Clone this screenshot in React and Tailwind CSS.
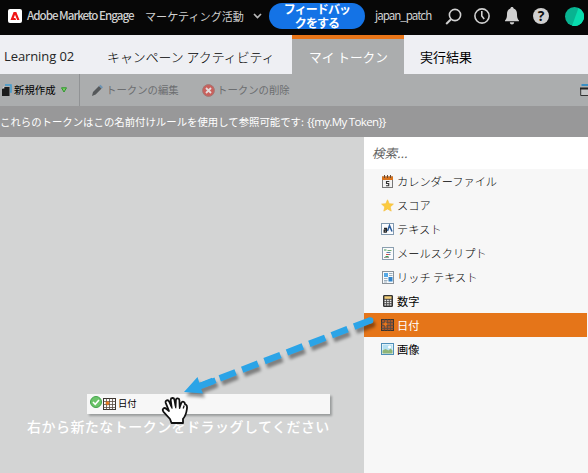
import React from "react";

const jp = "font-['Noto_Sans_CJK_JP',sans-serif]";

function AdobeLogo() {
  return (
    <svg className="ml-2 h-[14px] w-[14px] shrink-0" viewBox="0 0 14 14">
      <rect width="14" height="14" rx="2" fill="#fff" />
      <path d="M5.6 3h2.7l3.2 8H9.2L7 5.7 5.7 9h1.6l.8 2H2.5z" fill="#f01414" />
    </svg>
  );
}

function CalendarIcon() {
  return (
    <svg className="h-[13px] w-[13px]" viewBox="0 0 13 13">
      <rect x="1.5" y="2" width="10" height="10.5" fill="#f3f3f3" stroke="#777" />
      <rect x="1" y="1.5" width="11" height="3.5" fill="#d9731c" />
      <path d="M3.5 0v3M6.5 0v3M9.5 0v3" stroke="#6b4a30" />
      <path d="M8.3 6.5H5.5v2h2.2v2.3H5" fill="none" stroke="#333" strokeWidth="1.1" />
    </svg>
  );
}

function StarIcon() {
  return (
    <svg className="h-[13px] w-[13px]" viewBox="0 0 13 13">
      <path d="M6.5.8l1.7 3.9 4.2.4-3.2 2.8 1 4.2-3.7-2.2-3.7 2.2 1-4.2L.6 5.1l4.2-.4z" fill="#fbcb3f" stroke="#f5be40" strokeWidth=".7" strokeLinejoin="round" />
    </svg>
  );
}

function TextIcon() {
  return (
    <svg className="h-[12px] w-[13px]" viewBox="0 0 13 12">
      <rect x=".5" y=".5" width="12" height="11" fill="#fafcff" stroke="#829ab0" />
      <path d="M3 5.5h2.4v4M5.4 7.2H3.2v2h2.2" fill="none" stroke="#222" strokeWidth="1.3" />
      <path d="M6.5 8l2-5.5L11 8.5" fill="none" stroke="#2a5c9a" strokeWidth="1.5" />
    </svg>
  );
}

function ScriptIcon() {
  return (
    <svg className="h-[13px] w-[12px]" viewBox="0 0 12 13">
      <rect x=".5" y=".5" width="11" height="12" fill="#fbfbfb" stroke="#8b9fb0" />
      <path d="M2 3h2.5M3.5 9.5h3" stroke="#3f9b52" />
      <path d="M5.500 3.500H9.500" stroke="#6fa96f" />
      <path d="M4 7.500h3" stroke="#cf5548" />
      <path d="M4.500 5.500h4M7 7.500h1.500" stroke="#587ea9" />
      <path d="M2 10.500h5" stroke="#999" />
    </svg>
  );
}

function RichIcon() {
  return (
    <svg className="h-[13px] w-[12px]" viewBox="0 0 12 13">
      <rect x=".5" y=".5" width="11" height="12" fill="#f7fafc" stroke="#8b9299" />
      <rect x="2" y="2" width="4" height="4" fill="#55a9e6" />
      <rect x="6.5" y="6" width="4" height="4.5" fill="#2f83cb" />
      <path d="M7 2.500h3.500M7 4.500h3.500M2 7.500h3.500M2 9.500h3.500M2 11h3" stroke="#9fb0bd" />
    </svg>
  );
}

function NumberIcon() {
  return (
    <svg className="h-[12px] w-[10px]" viewBox="0 0 10 12">
      <rect x=".5" y=".5" width="9" height="11" rx=".5" fill="#444" stroke="#333" />
      <rect x="1.5" y="1.3" width="7" height="2.5" fill="#f3cd77" />
      <path d="M1.500 5.500h7M1.500 7.700h7M1.500 9.900h7" stroke="#eee" strokeWidth="1.3" strokeDasharray="1.7 .9" />
    </svg>
  );
}

function DateIcon({ fill }) {
  return (
    <svg className="h-[12px] w-[13px]" viewBox="0 0 13 12">
      <rect x=".5" y=".5" width="12" height="11" fill={fill} stroke="#3c3530" />
      <path d="M.5 3.500h12M.5 6.500h12M.5 9.500h12M3.500.5v11M6.500.5v11M9.500.5v11" stroke="#5b4c42" strokeWidth=".8" />
      <path d="M4.500 3.300v4M2.600 5.200h3.800" stroke="#e8781c" strokeWidth="1.7" />
    </svg>
  );
}

function ImageIcon() {
  return (
    <svg className="h-[12px] w-[13px]" viewBox="0 0 13 12">
      <rect x=".5" y=".5" width="12" height="11" fill="#fff" stroke="#4e8fb8" />
      <rect x="1.5" y="1.5" width="10" height="9" fill="#b5e0f2" />
      <path d="M1.500 7.500l3-1.500 3 1.500 2-2 2 2v3h-10z" fill="#8fb577" />
      <circle cx="8.5" cy="4" r="1.5" fill="#fff" />
    </svg>
  );
}

function Header() {
  return (
    <header className={`${jp} flex h-[35px] items-center bg-[#070707] pb-[3px] text-[#d0d0d0]`}>
      <AdobeLogo />
      <span className="ml-[5px] w-[108px] shrink-0 text-[11.6px] font-medium tracking-[-1px] whitespace-nowrap">Adobe Marketo Engage</span>
      <span className="ml-[10px] w-[101px] shrink-0 text-[11.1px] whitespace-nowrap">マーケティング活動</span>
      <svg className="ml-[7px] h-[6px] w-[9px] shrink-0" viewBox="0 0 9 6">
        <path d="M1 1l3.500 3.500L8 1" fill="none" stroke="#b8b8b8" strokeWidth="1.7" />
      </svg>
      <button className="ml-[7px] flex h-[26px] w-[96px] shrink-0 items-center justify-center rounded-full bg-[#1473e6] text-center text-[12px] leading-[14px] font-bold tracking-[-0.9px] text-white">
        フィードバッ
        <br />
        クをする
      </button>
      <span className="ml-[10px] w-[58px] shrink-0 text-[11.6px] tracking-[-1px] whitespace-nowrap">japan_patch</span>
      <svg className="ml-[12px] h-[17px] w-[17px] shrink-0" viewBox="0 0 17 17">
        <circle cx="10" cy="7" r="5.6" fill="none" stroke="#d0d0d0" strokeWidth="1.6" />
        <path d="M6 11.200L1.200 16" stroke="#d0d0d0" strokeWidth="2" />
      </svg>
      <svg className="ml-[12px] h-[16px] w-[16px] shrink-0" viewBox="0 0 16 16">
        <circle cx="8" cy="8" r="7.1" fill="none" stroke="#d0d0d0" strokeWidth="1.6" />
        <path d="M7.800 3v5l2.400 3" fill="none" stroke="#d0d0d0" strokeWidth="1.6" />
      </svg>
      <svg className="ml-[15px] h-[18px] w-[14px] shrink-0" viewBox="0 0 14 18">
        <path d="M7 0c1 0 1.600.6 1.600 1.600C11 2.300 12 4.500 12 7c0 4 .8 5 2 6.500v.8H0v-.8C1.200 12 2 11 2 7c0-2.500 1-4.700 3.400-5.400C5.400.6 6 0 7 0zM4.800 15.300h4.400C9 16.900 8.200 17.500 7 17.500s-2-.6-2.200-2.200z" fill="#d0d0d0" />
      </svg>
      <span className="ml-[14px] flex h-4 w-4 shrink-0 items-center justify-center rounded-full bg-[#d0d0d0] font-['Open_Sans',sans-serif] text-[14px] leading-none font-bold text-[#111]">?</span>
      <svg className="ml-[16px] h-[19px] w-[19px] shrink-0" viewBox="0 0 19 19">
        <circle cx="9.5" cy="9.5" r="9.5" fill="#08b391" />
        <path d="M13.500.9A9.500 9.500 0 0 1 7 18.700z" fill="#08dcae" />
      </svg>
    </header>
  );
}

function Tabs() {
  return (
    <nav className={`${jp} flex h-[39px] bg-[#eeeff3] text-[12.9px] text-[#262626]`}>
      <div className="flex w-[292px] items-center pt-[5px]">
        <span className="ml-[4px] w-[103px] font-['Open_Sans',sans-serif] text-[13px] tracking-[-0.1px]">Learning 02</span>
        <span className="font-light whitespace-nowrap text-black">キャンペーン アクティビティ</span>
      </div>
      <div className="flex w-[112px] items-center border-t-4 border-[#e87518] bg-[#abadae] pl-[17px] pt-[1px] text-[12.7px] text-white">
        <span className="whitespace-nowrap">マイ トークン</span>
      </div>
      <div className="flex items-center pt-[5px] pl-[16px] text-[13px] text-black">実行結果</div>
    </nav>
  );
}

function Toolbar() {
  return (
    <div className={`${jp} flex h-[32px] items-center bg-[#abadae] text-[10.4px] text-[#6c6e70]`}>
      <div className="flex h-full w-[80px] items-center border-r border-[#919395]">
        <svg className="ml-[2px] h-[12px] w-[10px]" viewBox="0 0 10 12">
          <path d="M3 1h6v7H8" fill="none" stroke="#3f9bd0" strokeWidth="1.5" />
          <path d="M2 3h5.500v9H0V5z" fill="#1c1c1c" />
          <path d="M0 4.500L2.300 2v2.500z" fill="#ddd" />
        </svg>
        <span className="ml-[2px] w-[42px] whitespace-nowrap text-black">新規作成</span>
        <svg className="ml-[5px] h-[6px] w-[6px]" viewBox="0 0 6 6">
          <path d="M.5 .8h5L3 5z" fill="#7dd164" stroke="#2e962e" />
        </svg>
      </div>
      <svg className="ml-[11px] h-[13px] w-[12px]" viewBox="0 0 12 13">
        <path d="M1 12l1-4L8 2l2.600 2.600-6 6z" fill="#55585a" />
        <path d="M8 2l1.500-1.200L12 3.300l-1.400 1.300z" fill="#6c94b4" />
      </svg>
      <span className="ml-[3px] w-[74px] whitespace-nowrap">トークンの編集</span>
      <svg className="ml-[22px] h-[13px] w-[13px]" viewBox="0 0 13 13">
        <circle cx="6.5" cy="6.5" r="5.9" fill="#c9605c" stroke="#a37775" />
        <path d="M4 4l5 5M9 4L4 9" stroke="#e3dcdc" strokeWidth="1.8" />
      </svg>
      <span className="ml-[2px] whitespace-nowrap">トークンの削除</span>
      <svg className="ml-auto h-[12px] w-[8px]" viewBox="0 0 8 12">
        <path d="M1.500 1H8" stroke="#398ec4" strokeWidth="2" />
        <path d="M8 4.500H.7v7H8" fill="#c4c5c6" stroke="#333" />
        <path d="M0 4.500h8" stroke="#222" strokeWidth="2" />
      </svg>
    </div>
  );
}

const tokens = [
  { label: "カレンダーファイル", icon: <CalendarIcon />, kana: true },
  { label: "スコア", icon: <StarIcon />, kana: true },
  { label: "テキスト", icon: <TextIcon />, kana: true },
  { label: "メールスクリプト", icon: <ScriptIcon />, kana: true },
  { label: "リッチ テキスト", icon: <RichIcon />, kana: true },
  { label: "数字", icon: <NumberIcon /> },
  { label: "日付", icon: <DateIcon fill="#a8582a" />, active: true },
  { label: "画像", icon: <ImageIcon /> },
];

function TokenPanel() {
  return (
    <aside className={`${jp} w-[224px] bg-[#f7f7f7]`}>
      <div className="flex h-[32px] items-center bg-white pl-[8px] text-[12.5px] text-[#606060] italic">
        検索...
      </div>
      <ul className="mr-px">
        {tokens.map((t) => (
          <li
            key={t.label}
            className={`flex h-[24px] items-center pl-[17px] text-[11.2px] ${t.active ? "bg-[#e57519] text-white" : "text-black"} ${t.kana ? "font-light" : "font-normal"}`}
          >
            <span className="flex w-[13px] justify-center">{t.icon}</span>
            <span className="ml-[3px] whitespace-nowrap">{t.label}</span>
          </li>
        ))}
      </ul>
    </aside>
  );
}

function DragArrow() {
  return (
    <svg className="absolute top-[310px] left-[170px] h-[100px] w-[215px]" viewBox="170 310 215 100">
      <g style={{ filter: "drop-shadow(2px 4px 1.5px rgba(0,0,0,.4))" }}>
        <path d="M370 320.500L200 386" stroke="#2ba4e7" strokeWidth="6.5" strokeDasharray="17 7" fill="none" />
        <circle cx="370.2" cy="320.4" r="3.2" fill="#2ba4e7" />
        <path d="M184 392l13.500-15 2 6 15-5.500 2 5.500-15.500 5.800 2 4.800z" fill="#2ba4e7" />
      </g>
    </svg>
  );
}

function HandCursor() {
  return (
    <svg className="absolute top-[397px] left-[161px] h-[28px] w-[28px]" viewBox="0 0 28 28">
      <path
        d="M10.500 26L9 22 2.500 14.800C.5 12 3.200 10 5.200 11.700L8 14 4.700 5.800C4 3.200 7.100 2.300 8.200 4.600l2.300 5L9.700 3c0-2.500 3.200-2.700 3.700-.4l1.200 6.600.3-6.200c.3-2.200 3.400-2 3.500.3l.3 7 1.700-4.500c.9-2 3.800-1 3.400 1.200l1.200.7c1.300.8 1.200 2.500.9 4.300-.5 4-1.700 7.500-3.900 9.800V26z"
        fill="#fff"
        stroke="#111"
        strokeWidth="1.8"
        strokeLinejoin="round"
      />
      <path d="M10.500 9.600l.7 2M14.600 9.200l.2 2M18.700 10.300l-.2 1.500M23.200 8.500L22.200 11.500" stroke="#111" strokeWidth="1.3" />
    </svg>
  );
}

export default function App() {
  return (
    <div className="relative flex h-[473px] w-[588px] flex-col overflow-hidden bg-[#d3d4d4]">
      <Header />
      <Tabs />
      <Toolbar />
      <div className={`${jp} flex h-[31px] items-center bg-[#989899] text-[10.4px] whitespace-nowrap text-white`}>
        <span>これらのトークンはこの名前付けルールを使用して参照可能です:</span>
        <span className="ml-[3px] font-['Open_Sans',sans-serif] text-[11.5px] tracking-[-0.65px]">{"{{my.My Token}}"}</span>
      </div>
      <main className="flex flex-1">
        <section className="flex w-[364px] flex-col bg-[#d3d4d4] pt-[257px]">
          <div className="ml-[87px] flex h-[20px] w-[243px] items-center bg-[#f7f7f7] shadow-[2px_2px_2px_#9a9d9d]">
            <svg className="mb-[4px] ml-[3px] h-[12px] w-[12px]" viewBox="0 0 12 12">
              <circle cx="6" cy="6" r="5.5" fill="#6cc46a" stroke="#41a34a" />
              <path d="M3 6l2.200 2.300L9 4" fill="none" stroke="#fff" strokeWidth="1.6" />
            </svg>
            <span className="ml-[1px]"><DateIcon fill="#fafafa" /></span>
            <span className="ml-[2px] text-[9.3px] text-black">
              <span className={jp}>日付</span>
            </span>
          </div>
          <p className={`${jp} ml-[27px] mt-[2px] text-[14px] leading-[20px] font-medium tracking-[0.46px] whitespace-nowrap text-white`}>
            右から新たなトークンをドラッグしてください
          </p>
        </section>
        <TokenPanel />
      </main>
      <DragArrow />
      <HandCursor />
    </div>
  );
}
